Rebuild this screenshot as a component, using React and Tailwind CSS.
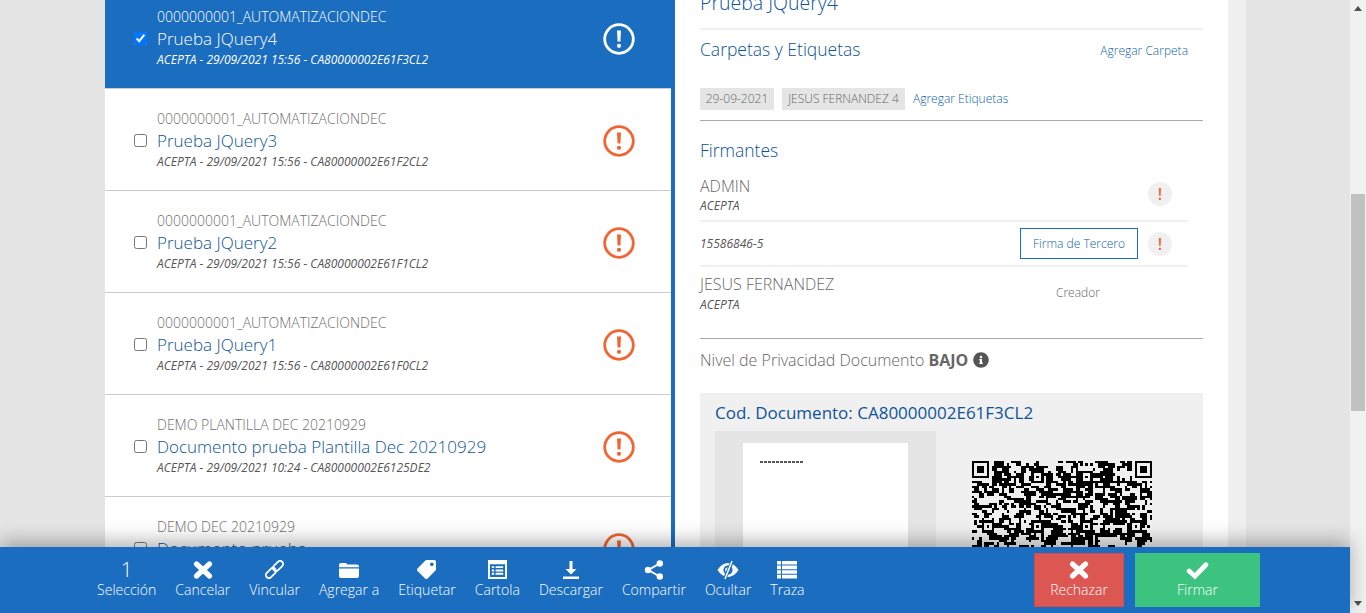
import { FaInfoCircle, FaTag } from "react-icons/fa";

const DOCS = [
  { group: "0000000001_AUTOMATIZACIONDEC", title: "Prueba JQuery4", meta: "ACEPTA - 29/09/2021 15:56 - CA80000002E61F3CL2", selected: true },
  { group: "0000000001_AUTOMATIZACIONDEC", title: "Prueba JQuery3", meta: "ACEPTA - 29/09/2021 15:56 - CA80000002E61F2CL2" },
  { group: "0000000001_AUTOMATIZACIONDEC", title: "Prueba JQuery2", meta: "ACEPTA - 29/09/2021 15:56 - CA80000002E61F1CL2" },
  { group: "0000000001_AUTOMATIZACIONDEC", title: "Prueba JQuery1", meta: "ACEPTA - 29/09/2021 15:56 - CA80000002E61F0CL2" },
  { group: "DEMO PLANTILLA DEC 20210929", title: "Documento prueba Plantilla Dec 20210929", meta: "ACEPTA - 29/09/2021 10:24 - CA80000002E6125DE2" },
  { group: "DEMO DEC 20210929", title: "Documento prueba", meta: "ACEPTA - 29/09/2021 10:20 - CA80000002E6124DE2" },
];

function IconX({ className }) {
  return (
    <svg viewBox="0 0 20 20" className={className} fill="none" stroke="currentColor" strokeWidth="5.2" strokeLinecap="round">
      <path d="M3.5 4l13 12M16.5 4l-13 12" />
    </svg>
  );
}

function IconCheck({ className }) {
  return (
    <svg viewBox="0 0 22 18" className={className} fill="none" stroke="currentColor" strokeWidth="4.6" strokeLinecap="round">
      <path d="M3 9.5l5.5 5L19 3.5" />
    </svg>
  );
}

function IconLink({ className }) {
  return (
    <svg viewBox="0 0 20 20" className={className} fill="none" stroke="currentColor" strokeWidth="1.9">
      <g transform="rotate(-45 10 10)">
        <rect x="-1.5" y="6.8" width="12.5" height="6.4" rx="3.2" />
        <rect x="9" y="6.8" width="12.5" height="6.4" rx="3.2" />
      </g>
    </svg>
  );
}

function IconFolder({ className }) {
  return (
    <svg viewBox="0 0 20 16" className={className} fill="currentColor">
      <path d="M0 3q0-2 2-2h5l1.5 1.5H18q2 0 2 2v.8H0z" />
      <path d="M0 6.6h20V14q0 2-2 2H2q-2 0-2-2z" />
    </svg>
  );
}

function IconCartola({ className }) {
  return (
    <svg viewBox="0 0 20 20" className={className} fill="currentColor">
      <path fillRule="evenodd" d="M0 0h20v20H0zM2 4.5V18h16V4.5z" />
      <path d="M4 6.5h2.5v2H4zM8 6.5h8v2H8zM4 10h2.5v2H4zM8 10h8v2H8zM4 13.5h2.5v2H4zM8 13.5h8v2H8z" />
    </svg>
  );
}

function IconDownload({ className }) {
  return (
    <svg viewBox="0 0 20 20" className={className} fill="currentColor">
      <path d="M8.5 1h3v8h4L10 14.5 4.5 9h4z" />
      <rect x="2" y="16.5" width="16" height="2.5" />
    </svg>
  );
}

function IconShare({ className }) {
  return (
    <svg viewBox="0 0 20 20" className={className} fill="currentColor">
      <path d="M15.5 3.5L4.5 10l11 6.5" fill="none" stroke="currentColor" strokeWidth="2" />
      <circle cx="15.8" cy="3.5" r="3.2" />
      <circle cx="4" cy="10" r="3.2" />
      <circle cx="15.8" cy="16.5" r="3.2" />
    </svg>
  );
}

function IconEyeOff({ className }) {
  return (
    <svg viewBox="0 0 22 20" className={className}>
      <path d="M0.5 10Q5 3 11 3t10.5 7Q17 17 11 17T0.5 10z" fill="currentColor" />
      <circle cx="11" cy="10" r="4.6" fill="#1a6dbf" />
      <circle cx="10.5" cy="10" r="2.4" fill="currentColor" />
      <path d="M15.5 0.5L7.5 19.5" stroke="#1a6dbf" strokeWidth="3.4" />
      <path d="M15 1L8 19" stroke="currentColor" strokeWidth="1.5" />
    </svg>
  );
}

function IconTraza({ className }) {
  return (
    <svg viewBox="0 0 20 18" className={className} fill="currentColor">
      <path d="M0 0h4v3.6H0zM5 0h15v3.6H5zM0 4.6h4v3.6H0zM5 4.6h15v3.6H5zM0 9.2h4v3.6H0zM5 9.2h15v3.6H5zM0 13.8h4v3.6H0zM5 13.8h15v3.6H5z" />
    </svg>
  );
}

const TOOLS = [
  { label: "Cancelar", icon: <IconX className="h-[20px] w-[20px]" /> },
  { label: "Vincular", icon: <IconLink className="h-[19px] w-[19px]" /> },
  { label: "Agregar a", icon: <IconFolder className="h-[16px] w-[20px]" /> },
  { label: "Etiquetar", icon: <FaTag className="h-[19px] w-[19px] -scale-x-100" /> },
  { label: "Cartola", icon: <IconCartola className="h-[19px] w-[19px]" /> },
  { label: "Descargar", icon: <IconDownload className="h-[20px] w-[20px]" /> },
  { label: "Compartir", icon: <IconShare className="h-[20px] w-[20px]" /> },
  { label: "Ocultar", icon: <IconEyeOff className="h-[20px] w-[22px]" /> },
  { label: "Traza", icon: <IconTraza className="h-[18px] w-[20px]" /> },
];

// version 14 code, the modules between the fixed patterns are only a look-alike
function qrPath() {
  const n = 73;
  const finders = [[0, 0], [n - 7, 0], [0, n - 7]];
  const aligns = [6, 26, 46, 66];
  let seed = 20210929;
  const next = () => {
    seed = (seed * 1664525 + 1013904223) >>> 0;
    return (seed >>> 16) / 65536;
  };
  let d = "";
  const rows = [];
  for (let y = 0; y < n; y++) {
    rows[y] = [];
    for (let x = 0; x < n; x++) {
      const left = x > 0 ? rows[y][x - 1] : false;
      const up = y > 0 ? rows[y - 1][x] : false;
      const roll = next();
      let on = roll < 0.3 ? left : roll < 0.5 ? up : next() > 0.48;
      rows[y][x] = on;
      for (const [fx, fy] of finders) {
        if (x >= fx - 1 && x <= fx + 7 && y >= fy - 1 && y <= fy + 7) {
          const dx = x - fx;
          const dy = y - fy;
          const inside = dx >= 0 && dx <= 6 && dy >= 0 && dy <= 6;
          const ring = dx === 0 || dx === 6 || dy === 0 || dy === 6;
          const core = dx >= 2 && dx <= 4 && dy >= 2 && dy <= 4;
          on = inside && (ring || core);
        }
      }
      for (const ay of aligns) {
        for (const ax of aligns) {
          const skip = (ax === 6 && ay === 6) || (ax === 66 && ay === 6) || (ax === 6 && ay === 66);
          if (!skip && Math.abs(x - ax) <= 2 && Math.abs(y - ay) <= 2) {
            const r = Math.max(Math.abs(x - ax), Math.abs(y - ay));
            on = r !== 1;
          }
        }
      }
      if (on) d += `M${x} ${y}h1v1h-1z`;
    }
  }
  return d;
}

function AlertIcon({ className }) {
  return (
    <svg viewBox="0 0 32 32" className={className} fill="none">
      <circle cx="16" cy="16" r="14.3" stroke="currentColor" strokeWidth="2.8" />
      <path d="M14 7.5h4l-.6 11h-2.8z" fill="currentColor" />
      <circle cx="16" cy="22.8" r="2.1" fill="currentColor" />
    </svg>
  );
}

function DocRow({ doc }) {
  const on = doc.selected;
  return (
    <div className={`flex h-[102px] shrink-0 items-center border-b border-[#cccccc] pl-[29px] pr-[36px] pt-[1px] ${on ? "bg-[#1a6dbf] text-white" : "bg-white"}`}>
      <input type="checkbox" readOnly checked={!!on} className="m-0 h-[13px] w-[13px] shrink-0" />
      <div className="ml-[10px] min-w-0 flex-1">
        <p className={`text-[14px] font-light leading-[18px] ${on ? "text-white" : "text-[#6f6f6f]"}`}>{doc.group}</p>
        <p className={`mt-[1px] text-[17px] font-light leading-[24px] ${on ? "text-white" : "text-[#0d5499]"}`}>{doc.title}</p>
        <p className={`mt-[1px] text-[12px] font-medium italic leading-[16px] ${on ? "text-white" : "text-[#555555]"}`}>{doc.meta}</p>
      </div>
      <AlertIcon className={`mt-[2px] h-[32px] w-[32px] shrink-0 ${on ? "text-white" : "text-[#f26430]"}`} />
    </div>
  );
}

function Badge() {
  return (
    <span className="flex h-[24px] w-[24px] items-center justify-center rounded-full bg-[#f0f0f0] text-[16px] font-semibold leading-none text-[#f26430]">!</span>
  );
}

export default function App() {
  return (
    <div className="relative flex h-screen overflow-hidden bg-[#e5e5e5] font-['Open_Sans',sans-serif] text-[#666666]">
      <div className="ml-[105px] flex w-[570px] shrink-0 flex-col border-r-4 border-[#1a6dbf] bg-white">
        <div className="-mt-[13px] flex flex-col">
          {DOCS.map((doc) => (
            <DocRow key={doc.meta} doc={doc} />
          ))}
        </div>
      </div>

      <div className="w-[553px] shrink-0 bg-white pl-[25px] pr-[25px]">
        <div className="-mt-[9px] h-[39px] border-b-2 border-[#f0f0f0] text-[19.5px] font-light leading-[24px] text-[#0d5499]">Prueba JQuery4</div>

        <div className="flex h-[32px] items-end justify-between pr-[15px]">
          <h2 className="pb-[1px] text-[17.5px] font-light leading-[24px] text-[#0b5394]">Carpetas y Etiquetas</h2>
          <a className="pb-[2px] text-[12px] font-light leading-[18px] text-[#0f5fae]">Agregar Carpeta</a>
        </div>

        <div className="mt-[26px] flex h-[33px] items-start border-b border-[#aaaaaa] text-[12px] font-light">
          <span className="w-[74px] bg-[#e5e5e5] text-center leading-[22px]">29-09-2021</span>
          <span className="ml-[8px] w-[123px] bg-[#e5e5e5] text-center leading-[22px]">JESUS FERNANDEZ 4</span>
          <a className="ml-[8px] leading-[22px] text-[#0f5fae]">Agregar Etiquetas</a>
        </div>

        <h2 className="mt-[17px] text-[17.5px] font-light leading-[24px] text-[#0b5394]">Firmantes</h2>

        <div className="mr-[15px] mt-[11px]">
          <div className="flex h-[49px] items-start justify-between border-b-2 border-[#f0f0f0] pr-[16px] pt-[1px]">
            <div>
              <p className="text-[16px] font-light leading-[24px] text-[#666666]">ADMIN</p>
              <p className="mt-[1px] text-[12px] font-medium italic leading-[14px] text-[#555555]">ACEPTA</p>
            </div>
            <div className="mt-[8px]"><Badge /></div>
          </div>
          <div className="flex h-[45px] items-center justify-between border-b-2 border-[#f0f0f0] pr-[16px]">
            <span className="text-[12px] italic text-[#555555]">15586846-5</span>
            <div className="flex items-center gap-[10px]">
              <button type="button" className="h-[31px] w-[118px] border border-[#1a6dbf] text-[12px] font-light text-[#0f5fae]">Firma de Tercero</button>
              <Badge />
            </div>
          </div>
          <div className="flex h-[71px] items-start pt-[5px]">
            <div className="w-[356px]">
              <p className="text-[16px] font-light leading-[24px] text-[#666666]">JESUS FERNANDEZ</p>
              <p className="mt-[2px] text-[12px] font-medium italic leading-[14px] text-[#555555]">ACEPTA</p>
            </div>
            <span className="mt-[12px] text-[12px] font-light leading-[18px]">Creador</span>
          </div>
        </div>

        <div className="flex h-[44px] items-center gap-[5px] border-t border-[#aaaaaa] pb-[2px] text-[16px] font-light">
          <span>Nivel de Privacidad Documento <b className="font-bold">BAJO</b></span>
          <FaInfoCircle className="h-[16px] w-[16px] text-[#555555]" />
        </div>

        <div className="mt-[11px] h-[400px] bg-[#f0f0f0] px-[15px]">
          <p className="pt-[8px] text-[17px] leading-[24px] text-[#0d5499]">Cod. Documento: CA80000002E61F3CL2</p>
          <div className="mt-[6px] flex">
            <div className="h-[300px] w-[221px] bg-[#e5e5e5] pl-[28px] pt-[12px]">
              <div className="h-[280px] w-[165px] bg-white pl-[17px] pt-[18px]">
                <div className="h-[2px] w-[43px] bg-[repeating-linear-gradient(90deg,#555555_0,#555555_3px,#ffffff_3px,#ffffff_4px)]" />
              </div>
            </div>
            <svg viewBox="0 0 73 73" shapeRendering="crispEdges" className="ml-[36px] mt-[30px] h-[180px] w-[180px]">
              <path d={qrPath()} fill="#000000" />
            </svg>
          </div>
        </div>
      </div>

      <div className="w-[18px] shrink-0 bg-[#f0f0f0]" />
      <div className="flex-1" />

      <div className="flex h-screen w-[16px] shrink-0 flex-col items-center bg-[#f1f1f1]">
        <div className="mt-[6px] h-0 w-0 border-x-[4px] border-b-[5px] border-x-transparent border-b-[#505050]" />
        <div className="mt-[183px] h-[217px] w-[14px] bg-[#c1c1c1]" />
        <div className="mt-[190px] h-0 w-0 border-x-[4px] border-t-[5px] border-x-transparent border-t-[#505050]" />
      </div>

      <div className="absolute bottom-0 left-0 right-[16px] flex h-[66px] items-center bg-[#1a6dbf] pl-[97px] pr-[90px] text-white shadow-[0_-6px_18px_rgba(0,0,0,0.3)]">
        <div className="flex gap-[19px] pb-[1px] text-[14.05px] font-light leading-[20px] text-white">
          <div className="flex flex-col items-center">
            <span className="h-[21px] text-[20px] font-light leading-[21px]">1</span>
            <span>Selección</span>
          </div>
          {TOOLS.map((t) => (
            <div key={t.label} className="flex flex-col items-center">
              <span className="flex h-[21px] items-center text-white">{t.icon}</span>
              <span>{t.label}</span>
            </div>
          ))}
        </div>
        <div className="ml-auto flex gap-[11px] text-[14px] font-light leading-[20px] text-white">
          <button type="button" className="flex h-[54px] w-[90px] flex-col items-center justify-center border border-[#d9484a] bg-[#dc5652]">
            <IconX className="h-[20px] w-[20px] text-white" />
            <span>Rechazar</span>
          </button>
          <button type="button" className="flex h-[54px] w-[125px] flex-col items-center justify-center bg-[#3dc380]">
            <IconCheck className="h-[19px] w-[23px] text-white" />
            <span>Firmar</span>
          </button>
        </div>
      </div>
    </div>
  );
}
